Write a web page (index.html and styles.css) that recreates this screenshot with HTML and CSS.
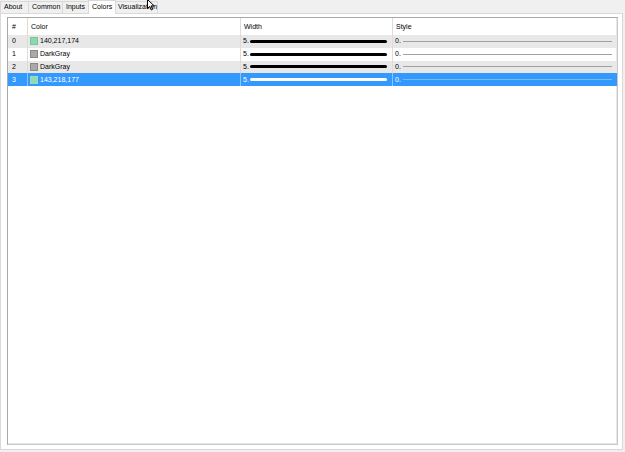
FILE: index.html
```html
<!DOCTYPE html>
<html lang="en">
<head>
    <meta charset="UTF-8">
    <title>Indicator Properties - Colors</title>
    <link rel="stylesheet" href="styles.css">
</head>
<body>

    <div class="window">
        <div class="tabs">
            <div class="tab tab-about">About</div>
            <div class="tab tab-common">Common</div>
            <div class="tab tab-inputs">Inputs</div>
            <div class="tab tab-colors active">Colors</div>
            <div class="tab tab-vis">Visualization</div>
        </div>

        <!-- mouse pointer resting over the tab strip -->
        <svg class="cursor" width="8" height="12" viewBox="0 0 8 12">
            <path d="M0.5 0.5 L0.5 9.5 L2.7 7.4 L4.3 11 L5.6 10.4 L4.1 6.9 L7.2 6.9 Z" fill="#fff" stroke="#000" stroke-width="1"/>
        </svg>

        <div class="page">
            <div class="list">
                <div class="row head">
                    <div class="cell num">#</div>
                    <div class="cell">Color</div>
                    <div class="cell">Width</div>
                    <div class="cell">Style</div>
                </div>

                <div class="row odd">
                    <div class="cell num">0</div>
                    <div class="cell"><span class="swatch green"></span>140,217,174</div>
                    <div class="cell"><span class="val">5.</span><span class="thick"></span></div>
                    <div class="cell"><span class="val">0.</span><span class="thin"></span></div>
                </div>

                <div class="row">
                    <div class="cell num">1</div>
                    <div class="cell"><span class="swatch gray"></span>DarkGray</div>
                    <div class="cell"><span class="val">5.</span><span class="thick"></span></div>
                    <div class="cell"><span class="val">0.</span><span class="thin"></span></div>
                </div>

                <div class="row odd">
                    <div class="cell num">2</div>
                    <div class="cell"><span class="swatch gray"></span>DarkGray</div>
                    <div class="cell"><span class="val">5.</span><span class="thick"></span></div>
                    <div class="cell"><span class="val">0.</span><span class="thin"></span></div>
                </div>

                <div class="row selected">
                    <div class="cell num">3</div>
                    <div class="cell"><span class="swatch green2"></span>143,218,177</div>
                    <div class="cell"><span class="val">5.</span><span class="thick"></span></div>
                    <div class="cell"><span class="val">0.</span><span class="thin"></span></div>
                </div>
            </div>
        </div>
    </div>

</body>
</html>
```

FILE: styles.css
```css
body {
    margin: 0;
    padding: 0;
    background-color: #f0f0f0;
    font-family: 'Liberation Sans', Arial, sans-serif;
    font-size: 7px;
    color: #000;
}

.window {
    position: relative;
    width: 625px;
    height: 452px;
}

/* tab strip */

.tabs {
    display: flex;
    height: 13px;
    align-items: flex-end;
}

.tab {
    box-sizing: border-box;
    height: 12px;
    line-height: 10px;
    padding: 0 3px;
    background-color: #f0f0f0;
    border: 1px solid #d9d9d9;
    border-bottom: none;
    margin-left: -1px;
    white-space: nowrap;
}

.tab-about { margin-left: 0; width: 29px; }
.tab-common { width: 35px; }
.tab-inputs { width: 27px; }
.tab-colors { width: 28px; }
.tab-vis { width: 43px; padding-left: 2px; }

.tab.active {
    height: 14px;
    line-height: 12px;
    background-color: #fff;
    position: relative;
    z-index: 1;
    margin-bottom: -1px;
}

.cursor {
    position: absolute;
    left: 147px;
    top: -1px;
}

/* tab page */

.page {
    box-sizing: border-box;
    width: 623px;
    height: 437px;
    background-color: #fff;
    border: 1px solid #d9d9d9;
    padding: 3px 4px 4px 6px;
}

.list {
    box-sizing: border-box;
    height: 428px;
    border: 1px solid #a8a8a8;
    border-right-color: #c8c8c8;
    border-bottom-color: #c8c8c8;
    box-shadow: inset -1px -1px 0 #e8e8e8;
    background-color: #fff;
}

.row {
    display: grid;
    grid-template-columns: 20px 213px 152px 1fr;
    height: 12.75px;
    line-height: 12px;
}

.row.head {
    height: 17px;
    line-height: 17px;
}

.row.odd {
    background-color: #e8e8e8;
}

.row.selected {
    background-color: #3399ff;
    color: #fff;
}

.cell {
    display: flex;
    align-items: center;
    padding-left: 3px;
    border-right: 1px solid #dcdcdc;
    white-space: nowrap;
    overflow: hidden;
}

.row.selected .cell {
    border-right-color: #8cc4fb;
}

.cell:last-child {
    border-right: none;
}

.cell.num {
    padding-left: 4px;
}

.swatch {
    box-sizing: border-box;
    width: 8px;
    height: 8px;
    margin-left: -1px;
    margin-right: 2px;
    border: 1px solid #9a9a9a;
}

.swatch.green { background-color: #8cd9ae; border-color: #7cc39c; }
.swatch.green2 { background-color: #8fdab1; border-color: #9ad8c0; }
.swatch.gray { background-color: #a9a9a9; border-color: #8a8a8a; }

.val {
    width: 7px;
    margin-left: -1px;
}

.thick {
    flex: 1;
    height: 3px;
    border-radius: 2px;
    margin-right: 5px;
    background-color: #000;
}

.thin {
    flex: 1;
    height: 1px;
    margin-left: 1px;
    margin-right: 5px;
    background-color: #a0a0a0;
}

.row.selected .thick {
    background-color: #fff;
}

.row.selected .thin {
    background-color: #7ab8f5;
}
```
